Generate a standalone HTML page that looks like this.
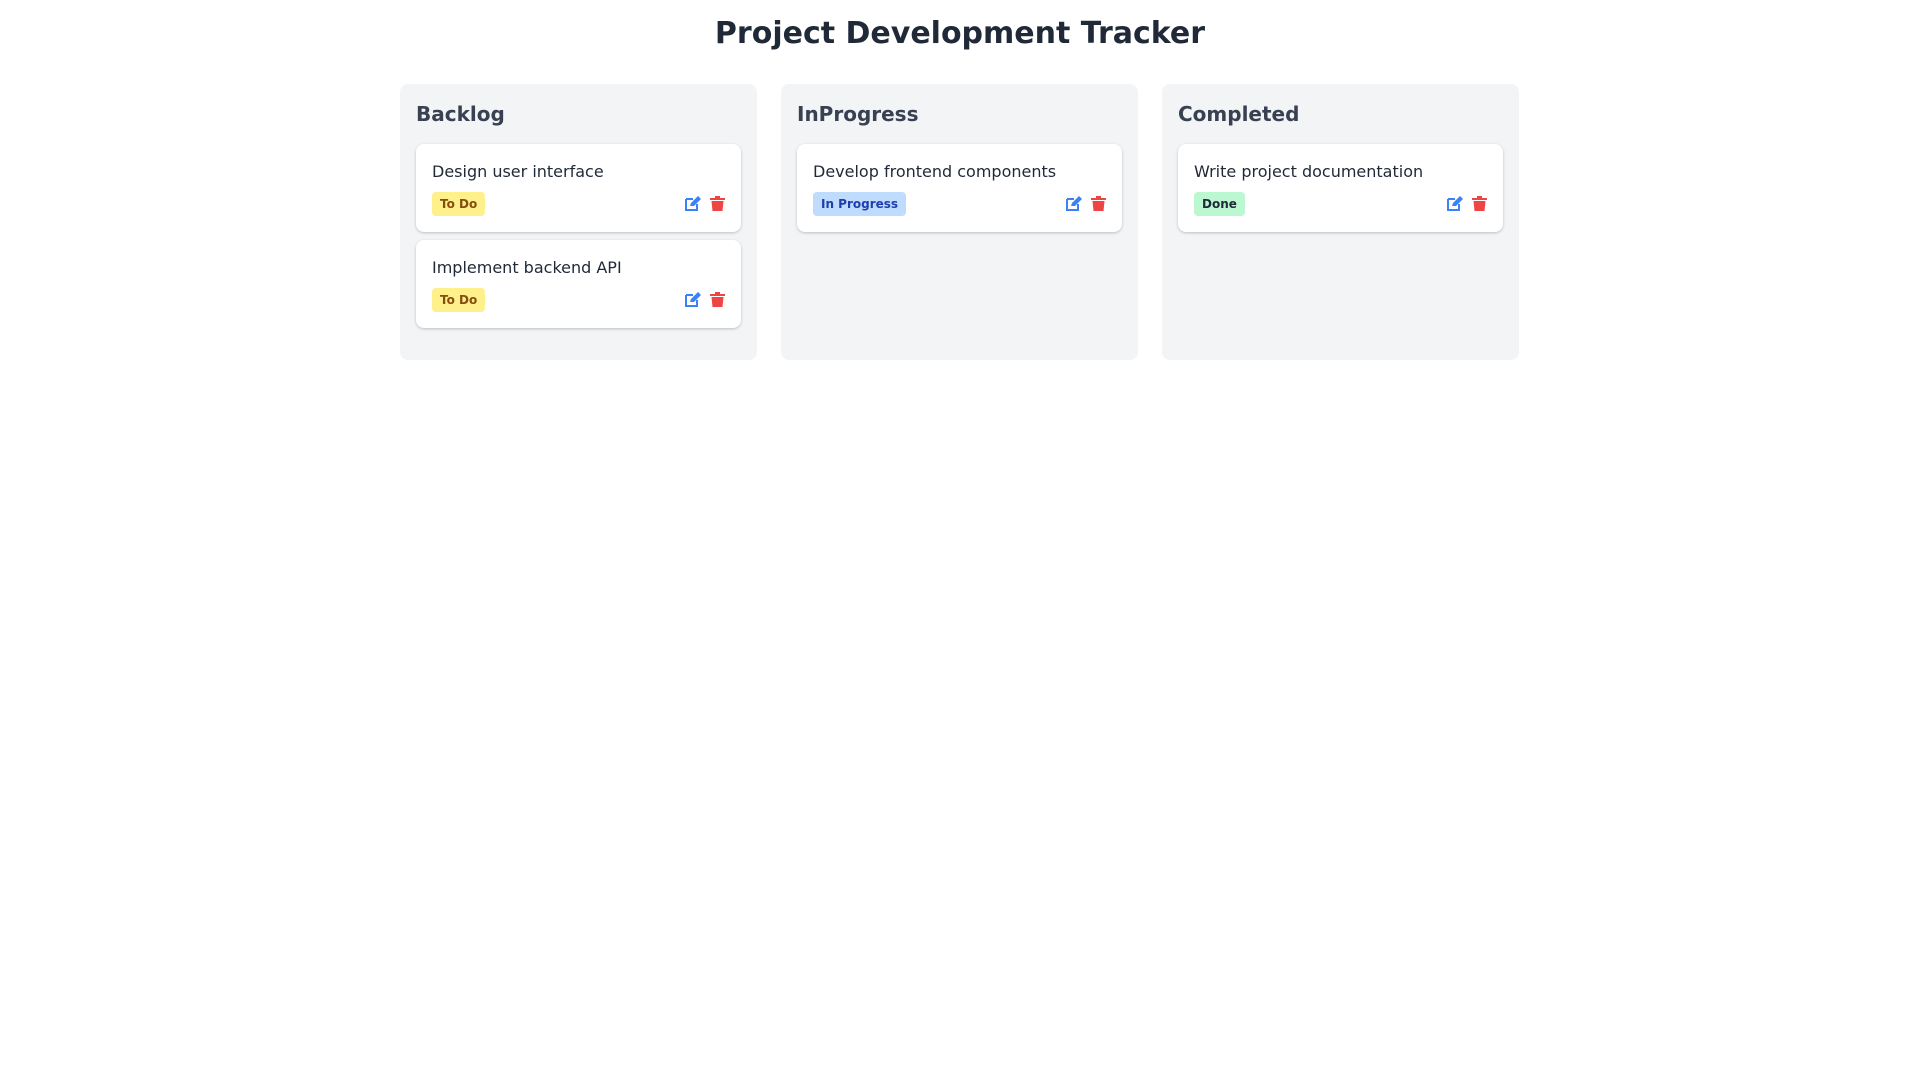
<!DOCTYPE html>
<html><head><meta charset="utf-8"><style>
*{box-sizing:border-box;margin:0;padding:0}
body{width:1920px;height:1080px;background:#fff;font-family:"DejaVu Sans","Liberation Sans",sans-serif;color:#1f2937}
h1{text-align:center;font-size:30px;font-weight:bold;line-height:36px;padding-top:16px;color:#1f2937}
.wrap{position:absolute;left:400px;top:84px;width:1120px;display:flex;gap:24px}
.col{width:357px;height:276px;background:#f3f4f6;border-radius:8px;padding:16px}
.col h2{font-size:20px;font-weight:bold;color:#374151;line-height:28px;margin-bottom:16px}
.card{background:#fff;border-radius:8px;box-shadow:0 1px 3px rgba(0,0,0,.15),0 1px 2px rgba(0,0,0,.08);height:88px;padding:17px 16px 16px;margin-bottom:8px;position:relative}
.card p{font-size:16px;line-height:22px;color:#1f2937}
.badge{position:absolute;left:16px;top:48px;height:24px;line-height:24px;padding:0 8px;border-radius:4px;font-size:12px;font-weight:bold}
.todo{background:#fef08a;color:#854d0e}
.prog{background:#bfdbfe;color:#1e40af}
.done{background:#bbf7d0;color:#1f2937}
.icons{position:absolute;right:16px;top:52px;display:flex;gap:8px}
</style></head><body>
<h1>Project Development Tracker</h1>
<div class="wrap">
<div class="col"><h2>Backlog</h2>
<div class="card"><p>Design user interface</p><span class="badge todo">To Do</span><div class="icons">ICONS</div></div>
<div class="card"><p>Implement backend API</p><span class="badge todo">To Do</span><div class="icons">ICONS</div></div>
</div>
<div class="col"><h2>InProgress</h2>
<div class="card"><p>Develop frontend components</p><span class="badge prog">In Progress</span><div class="icons">ICONS</div></div>
</div>
<div class="col"><h2>Completed</h2>
<div class="card"><p>Write project documentation</p><span class="badge done">Done</span><div class="icons">ICONS</div></div>
</div>
</div>
<script>
var ic='<svg width="17" height="15" viewBox="0 0 17 15"><path d="M1 3h7M1 3v11h11V8" fill="none" stroke="#3b82f6" stroke-width="2"/><path d="M5 10l1-3 7-7 3 3-7 7z" fill="#3b82f6"/></svg><svg width="15" height="15" viewBox="0 0 15 15"><rect x="5" y="0" width="5" height="2" fill="#ef4444"/><rect x="0" y="2" width="15" height="2" fill="#ef4444"/><path d="M1.5 5h12l-1 10h-10z" fill="#ef4444"/></svg>';
document.querySelectorAll('.icons').forEach(function(e){e.innerHTML=ic});
</script>
</body></html>
